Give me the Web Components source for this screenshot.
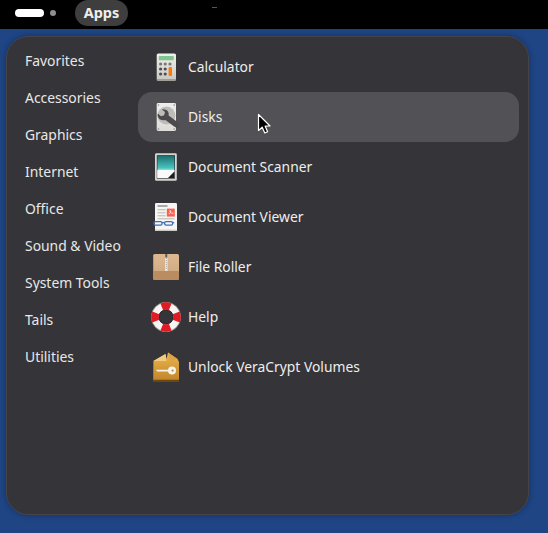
<!DOCTYPE html>
<html><head><meta charset="utf-8"><style>
html,body{margin:0;padding:0;height:533px;overflow:hidden;background:#1f4585}
body{font-family:"Noto Sans","Open Sans",sans-serif;position:relative}
</style></head><body>
<top-bar></top-bar>
<apps-menu>
  <cat-item slot="cats">Favorites</cat-item>
  <cat-item slot="cats">Accessories</cat-item>
  <cat-item slot="cats">Graphics</cat-item>
  <cat-item slot="cats">Internet</cat-item>
  <cat-item slot="cats">Office</cat-item>
  <cat-item slot="cats">Sound &amp; Video</cat-item>
  <cat-item slot="cats">System Tools</cat-item>
  <cat-item slot="cats">Tails</cat-item>
  <cat-item slot="cats">Utilities</cat-item>
  <app-item icon="calc">Calculator</app-item>
  <app-item icon="disks" hover>Disks</app-item>
  <app-item icon="scan">Document Scanner</app-item>
  <app-item icon="view">Document Viewer</app-item>
  <app-item icon="roller">File Roller</app-item>
  <app-item icon="help">Help</app-item>
  <app-item icon="vera">Unlock VeraCrypt Volumes</app-item>
</apps-menu>
<mouse-cursor></mouse-cursor>
<script>
const ICONS={
calc:`<defs><linearGradient id="c" x1="0" y1="0" x2="0" y2="1"><stop offset="0" stop-color="#f1f0ec"/><stop offset="1" stop-color="#c9c7c0"/></linearGradient></defs>
<rect x="6.7" y="2.5" width="19.3" height="27.2" rx="1.6" fill="url(#c)"/><rect x="6.7" y="28" width="19.3" height="1.7" rx=".8" fill="#a09e97"/>
<rect x="8.8" y="5" width="15" height="4.2" rx=".8" fill="#7fc58f"/>
<g fill="#77767b"><circle cx="10.6" cy="13" r="1.6"/><circle cx="15.2" cy="13" r="1.6"/><circle cx="20" cy="13" r="1.6"/></g>
<g fill="#4d4d56"><circle cx="10.6" cy="18" r="1.6"/><circle cx="15.2" cy="18" r="1.6"/><circle cx="10.6" cy="23" r="1.6"/><circle cx="15.2" cy="23" r="1.6"/></g>
<rect x="18.6" y="16" width="3.4" height="9" rx="1.2" fill="#ff7800"/>`,
disks:`<defs><linearGradient id="d" x1="0" y1="0" x2="0" y2="1"><stop offset="0" stop-color="#eeeeec"/><stop offset="1" stop-color="#dddcd8"/></linearGradient></defs>
<rect x="6.7" y="2" width="19.3" height="28" rx="1.4" fill="url(#d)"/>
<circle cx="16.4" cy="14.5" r="9" fill="#bdbcb8"/>
<g fill="#8b8a86"><circle cx="8.5" cy="4" r=".8"/><circle cx="24.2" cy="4" r=".8"/><circle cx="8.5" cy="28" r=".8"/><circle cx="24.2" cy="28" r=".8"/></g>
<path d="M7.8 12.5 L11 15.2 L14.2 14.2 L15 11 L12 8.4 C16 7.4 19.6 10.4 18.6 14.6 L24 18.4 L28 21.4 C29.8 23 30 25.2 28.8 26.2 C27.6 27.2 25.4 26.6 23.8 25.2 L15.4 19 C10.6 20.2 6.8 17 7.8 12.5Z" fill="#4a4a4f"/>`,
scan:`<defs><linearGradient id="s" x1="0" y1="0" x2="0" y2="1"><stop offset="0" stop-color="#1d6e70"/><stop offset=".55" stop-color="#48c5c0"/><stop offset=".72" stop-color="#e8f7f6"/></linearGradient></defs>
<rect x="5" y="2.2" width="21.8" height="27.6" rx="1.4" fill="#d6d5d0"/>
<rect x="6.8" y="4.2" width="18.2" height="23.4" fill="#2a2a2c"/>
<rect x="7.4" y="4.8" width="17" height="22.2" fill="url(#s)"/><path d="M7.4 19H24.4V20.5L18 27H7.4Z" fill="#fafafa"/>
<path d="M24.4 20.5V27H18Z" fill="#1c1c1e"/>`,
view:`<rect x="5" y="2" width="22" height="28" rx="1.2" fill="#f6f5f4"/><rect x="5" y="28.6" width="22" height="1.4" fill="#c9c8c3"/>
<rect x="7.5" y="4.4" width="10" height="1.2" fill="#77767b"/>
<g fill="#c8c7c3"><rect x="7.5" y="8" width="8" height="1.4"/><rect x="7.5" y="11" width="8" height="1.4"/><rect x="7.5" y="14" width="8" height="1.4"/><rect x="7.5" y="17" width="17" height="1.4"/></g>
<rect x="16.8" y="7.6" width="8" height="8" fill="#f66151"/><path d="M18.6 12.4c1.4 1.6 3-2.8 1.5-2.9-1.2 0 .3 3.7 3.4 2.6" fill="none" stroke="#fff" stroke-width=".7"/>
<g fill="none" stroke="#3c6eb4" stroke-width="1.3"><rect x="4" y="20.6" width="8" height="3.6" rx="1.4"/><rect x="14.6" y="20.6" width="8" height="3.6" rx="1.4"/><path d="M12 21.6h2.6M22.6 21.6h1.6"/></g>`,
roller:`<defs><linearGradient id="r" x1="0" y1="0" x2="0" y2="1"><stop offset="0" stop-color="#dcb88f"/><stop offset="1" stop-color="#cda680"/></linearGradient></defs>
<rect x="3.2" y="3" width="25.8" height="26" rx="1.6" fill="url(#r)"/><rect x="3.2" y="20" width="25.8" height="9" rx="1.4" fill="#b98d60"/>
<rect x="15" y="3" width="2.6" height="17" fill="#e9e6e1"/><rect x="15.2" y="3" width="2.2" height="3.6" fill="#5e5c64"/>
<path d="M16.3 7v12" stroke="#a9a7a3" stroke-width="1" stroke-dasharray="1 1"/>`,
help:`<circle cx="16" cy="16" r="11" fill="none" stroke="#f6f5f4" stroke-width="7.4"/>
<circle cx="16" cy="16" r="14.7" fill="none" stroke="#77716a" stroke-width=".7"/><circle cx="16" cy="16" r="7.2" fill="none" stroke="#1e1e1e" stroke-width=".8"/>
<g fill="none" stroke="#e01b24" stroke-width="7.4"><path d="M11.8 5.8A11 11 0 0 1 20.2 5.8"/><path d="M11.8 26.2A11 11 0 0 0 20.2 26.2"/><path d="M5.8 11.8A11 11 0 0 0 5.8 20.2"/><path d="M26.2 11.8A11 11 0 0 1 26.2 20.2"/></g>`,
vera:`<defs><linearGradient id="v" x1="0" y1="0" x2="0" y2="1"><stop offset="0" stop-color="#eeb650"/><stop offset="1" stop-color="#c08428"/></linearGradient></defs>
<path d="M3.4 10 L15.5 3 L16.5 8 L18 1.5 L27.5 8 L29 11 V29 Q29 30.5 27 30.5 H5 Q3.2 30.5 3.2 29Z" fill="url(#v)"/>
<path d="M3.4 10 L15.5 3 L16.5 10Z" fill="#f2cb7e"/><path d="M18 1.5 L27.5 8 L20 10Z" fill="#dda344"/>
<path d="M3.2 28.8H29V29.5Q29 31 27 31H5Q3.2 31 3.2 29.5Z" fill="#6d4712"/>
<circle cx="22" cy="19.5" r="4" fill="#f5f3ec"/><circle cx="22.6" cy="19.5" r="1.1" fill="#c08428"/>
<path d="M6 18.8H19V20.4H7.2Z" fill="#f5f3ec"/>`
};
function def(name,css,html,ctor){customElements.define(name,class extends HTMLElement{
  constructor(){super();const r=this.attachShadow({mode:"open"});r.innerHTML=`<style>${css}</style>${html}`;}
  connectedCallback(){ctor&&ctor(this)}
});}
def("top-bar",`:host{display:flex;align-items:flex-start;height:29px;background:#000;padding-left:15px;box-sizing:border-box}
.pill{width:29px;height:8px;margin-top:9px;border-radius:4px;background:#fff}
.dot{width:6px;height:6px;margin:10px 0 0 6px;border-radius:50%;background:#8f8f8f}
.apps{margin-left:19px;width:53px;height:26px;border-radius:13px;background:#3e3e3e;color:#eee;font:700 14.5px/25px "Noto Sans",sans-serif;text-align:center}
.dash{width:5px;height:1px;background:#555;margin:7px 0 0 84px}`,
`<div class="pill"></div><div class="dot"></div><div class="apps">Apps</div><div class="dash"></div>`);
def("apps-menu",`:host{display:flex;box-sizing:border-box;width:523px;height:479px;margin:7px 0 0 6px;padding:5px 9px 0 0;background:#353438;border:1px solid #454448;border-radius:22px;box-shadow:0 0 6px rgba(0,0,0,.3);color:#eeeeec}
.cats{display:flex;flex-direction:column;width:131px;box-sizing:border-box;padding-left:18px}
.list{flex:1;display:flex;flex-direction:column}`,
`<div class="cats"><slot name="cats"></slot></div><div class="list"><slot></slot></div>`);
def("cat-item",`:host{display:block;height:37px;line-height:37px;font-size:13.9px;color:#e8e8e6;white-space:nowrap}`,`<slot></slot>`);
def("app-item",`:host{display:flex;align-items:center;gap:6px;height:50px;padding-left:12px;border-radius:14px;font-size:13.85px;color:#eeeeec}
:host([hover]){background:#525156}
svg{width:32px;height:32px;flex:none}
.t{margin-top:-2px}`,`<span id="i"></span><span class="t"><slot></slot></span>`,el=>{
  const s=el.shadowRoot.getElementById("i");s.style.cssText="display:flex";
  s.innerHTML=`<svg viewBox="0 0 32 32">${ICONS[el.getAttribute("icon")]}</svg>`;
});
def("mouse-cursor",`:host{position:absolute;left:255px;top:112px;width:20px;height:24px;display:block}`,
`<svg width="20" height="24" viewBox="0 0 20 24"><path d="M3.5 2.5V18.5L7.2 15.2L9.8 21L12.6 19.8L10.2 14.2L15 14Z" fill="#000" stroke="#fff" stroke-width="1.2" stroke-linejoin="round"/></svg>`);
</script>
</body></html>
